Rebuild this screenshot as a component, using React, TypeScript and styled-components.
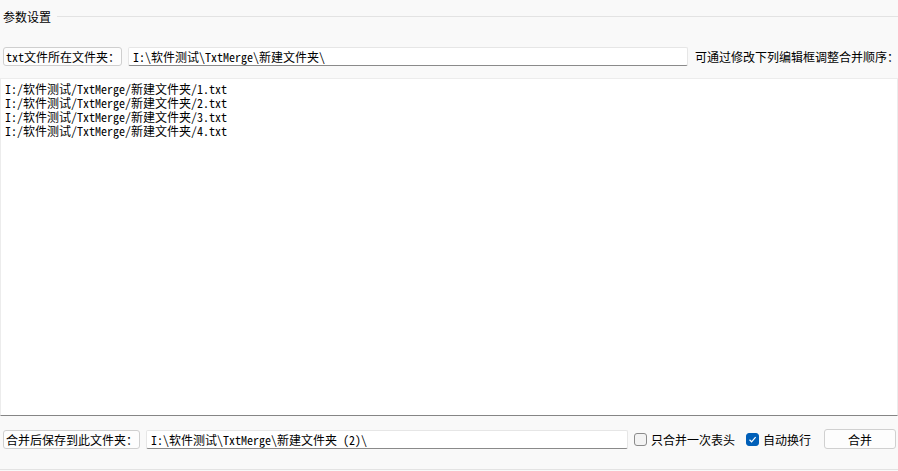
import React from "react";
import styled, { createGlobalStyle } from "styled-components";

const GlobalStyle = createGlobalStyle`
  html, body {
    margin: 0;
    padding: 0;
    background: #f9f9f9;
  }
  body {
    font-family: "Noto Sans CJK SC", "Liberation Sans", sans-serif;
    font-size: 12px;
    color: #000;
  }
`;

const MONO = `"Noto Sans Mono CJK SC", "Liberation Mono", "Noto Sans CJK SC", monospace`;

const Window = styled.main`
  width: 898px;
  height: 471px;
  display: flex;
  flex-direction: column;
  background: #f9f9f9;
  overflow: hidden;
`;

const GroupHeader = styled.div`
  display: flex;
  align-items: center;
  gap: 6px;
  height: 17px;
  padding: 8px 0 0 3px;
`;

const GroupTitle = styled.span`
  font-size: 12px;
  line-height: 17px;
  white-space: nowrap;
`;

const GroupLine = styled.div`
  flex: 1;
  height: 1px;
  background: #e3e3e3;
`;

const Row = styled.div<{ $top: number }>`
  display: flex;
  align-items: center;
  height: 20px;
  margin-top: ${(p) => p.$top}px;
  padding-left: 3px;
`;

const LabelButton = styled.div<{ $w: number }>`
  box-sizing: border-box;
  width: ${(p) => p.$w}px;
  height: 19px;
  flex: none;
  display: flex;
  align-items: center;
  padding-left: 2px;
  background: #fdfdfd;
  border: 1px solid #cfcfcf;
  border-radius: 3px;
  font-family: ${MONO};
  font-size: 12px;
  white-space: nowrap;
  overflow: hidden;
`;

const PathInput = styled.div<{ $w: number; $gap: number }>`
  box-sizing: border-box;
  width: ${(p) => p.$w}px;
  height: 19px;
  flex: none;
  margin-left: ${(p) => p.$gap}px;
  display: flex;
  align-items: center;
  padding-left: 4px;
  background: #fff;
  border: 1px solid #e6e6e6;
  border-bottom: 1px solid #8a8a8a;
  border-radius: 2px;
  font-family: ${MONO};
  font-size: 12px;
  white-space: pre;
  overflow: hidden;
`;

const Hint = styled.span`
  margin-left: 7px;
  white-space: nowrap;
  font-size: 12px;
`;

const Editor = styled.div`
  box-sizing: border-box;
  margin-top: 12px;
  height: 338px;
  background: #fff;
  border: 1px solid #ececec;
  border-bottom: 1px solid #858585;
  padding: 3px 0 0 4px;
  font-family: ${MONO};
  font-size: 12px;
  line-height: 14px;
  white-space: pre;
`;

const Check = styled.span<{ $on?: boolean }>`
  box-sizing: border-box;
  width: 13px;
  height: 13px;
  flex: none;
  display: inline-flex;
  align-items: center;
  justify-content: center;
  border-radius: 3px;
  border: 1px solid ${(p) => (p.$on ? "#005fb8" : "#8b8b8b")};
  background: ${(p) => (p.$on ? "#005fb8" : "#f3f3f3")};
`;

const CheckItem = styled.label<{ $gap: number }>`
  display: flex;
  align-items: center;
  gap: 4px;
  margin-left: ${(p) => p.$gap}px;
  white-space: nowrap;
  font-size: 12px;
`;

const PushButton = styled.button`
  box-sizing: border-box;
  width: 72px;
  height: 20px;
  margin-left: 13px;
  padding: 0;
  background: #fdfdfd;
  border: 1px solid #d0d0d0;
  border-radius: 3px;
  font-family: "Noto Sans CJK SC", sans-serif;
  font-size: 12px;
  color: #000;
`;

const BottomLine = styled.div`
  margin-top: auto;
  margin-bottom: 1px;
  height: 1px;
  background: #e3e3e3;
`;

const files = [1, 2, 3, 4].map((n) => `I:/软件测试/TxtMerge/新建文件夹/${n}.txt`);

export default function App() {
  return (
    <>
      <GlobalStyle />
      <Window>
        <GroupHeader>
          <GroupTitle>参数设置</GroupTitle>
          <GroupLine />
        </GroupHeader>
        <Row $top={21}>
          <LabelButton $w={119}>txt文件所在文件夹：</LabelButton>
          <PathInput $w={560} $gap={6}>I:\软件测试\TxtMerge\新建文件夹\</PathInput>
          <Hint>可通过修改下列编辑框调整合并顺序：</Hint>
        </Row>
        <Editor>{files.join("\n")}</Editor>
        <Row $top={13}>
          <LabelButton $w={137}>合并后保存到此文件夹：</LabelButton>
          <PathInput $w={482} $gap={6}>I:\软件测试\TxtMerge\新建文件夹 (2)\</PathInput>
          <CheckItem $gap={6}>
            <Check />
            只合并一次表头
          </CheckItem>
          <CheckItem $gap={11}>
            <Check $on>
              <svg width="9" height="9" viewBox="0 0 9 9">
                <path d="M1.5 4.8 L3.6 6.8 L7.6 2.2" fill="none" stroke="#fff" strokeWidth="1.2" />
              </svg>
            </Check>
            自动换行
          </CheckItem>
          <PushButton>合并</PushButton>
        </Row>
        <BottomLine />
      </Window>
    </>
  );
}
